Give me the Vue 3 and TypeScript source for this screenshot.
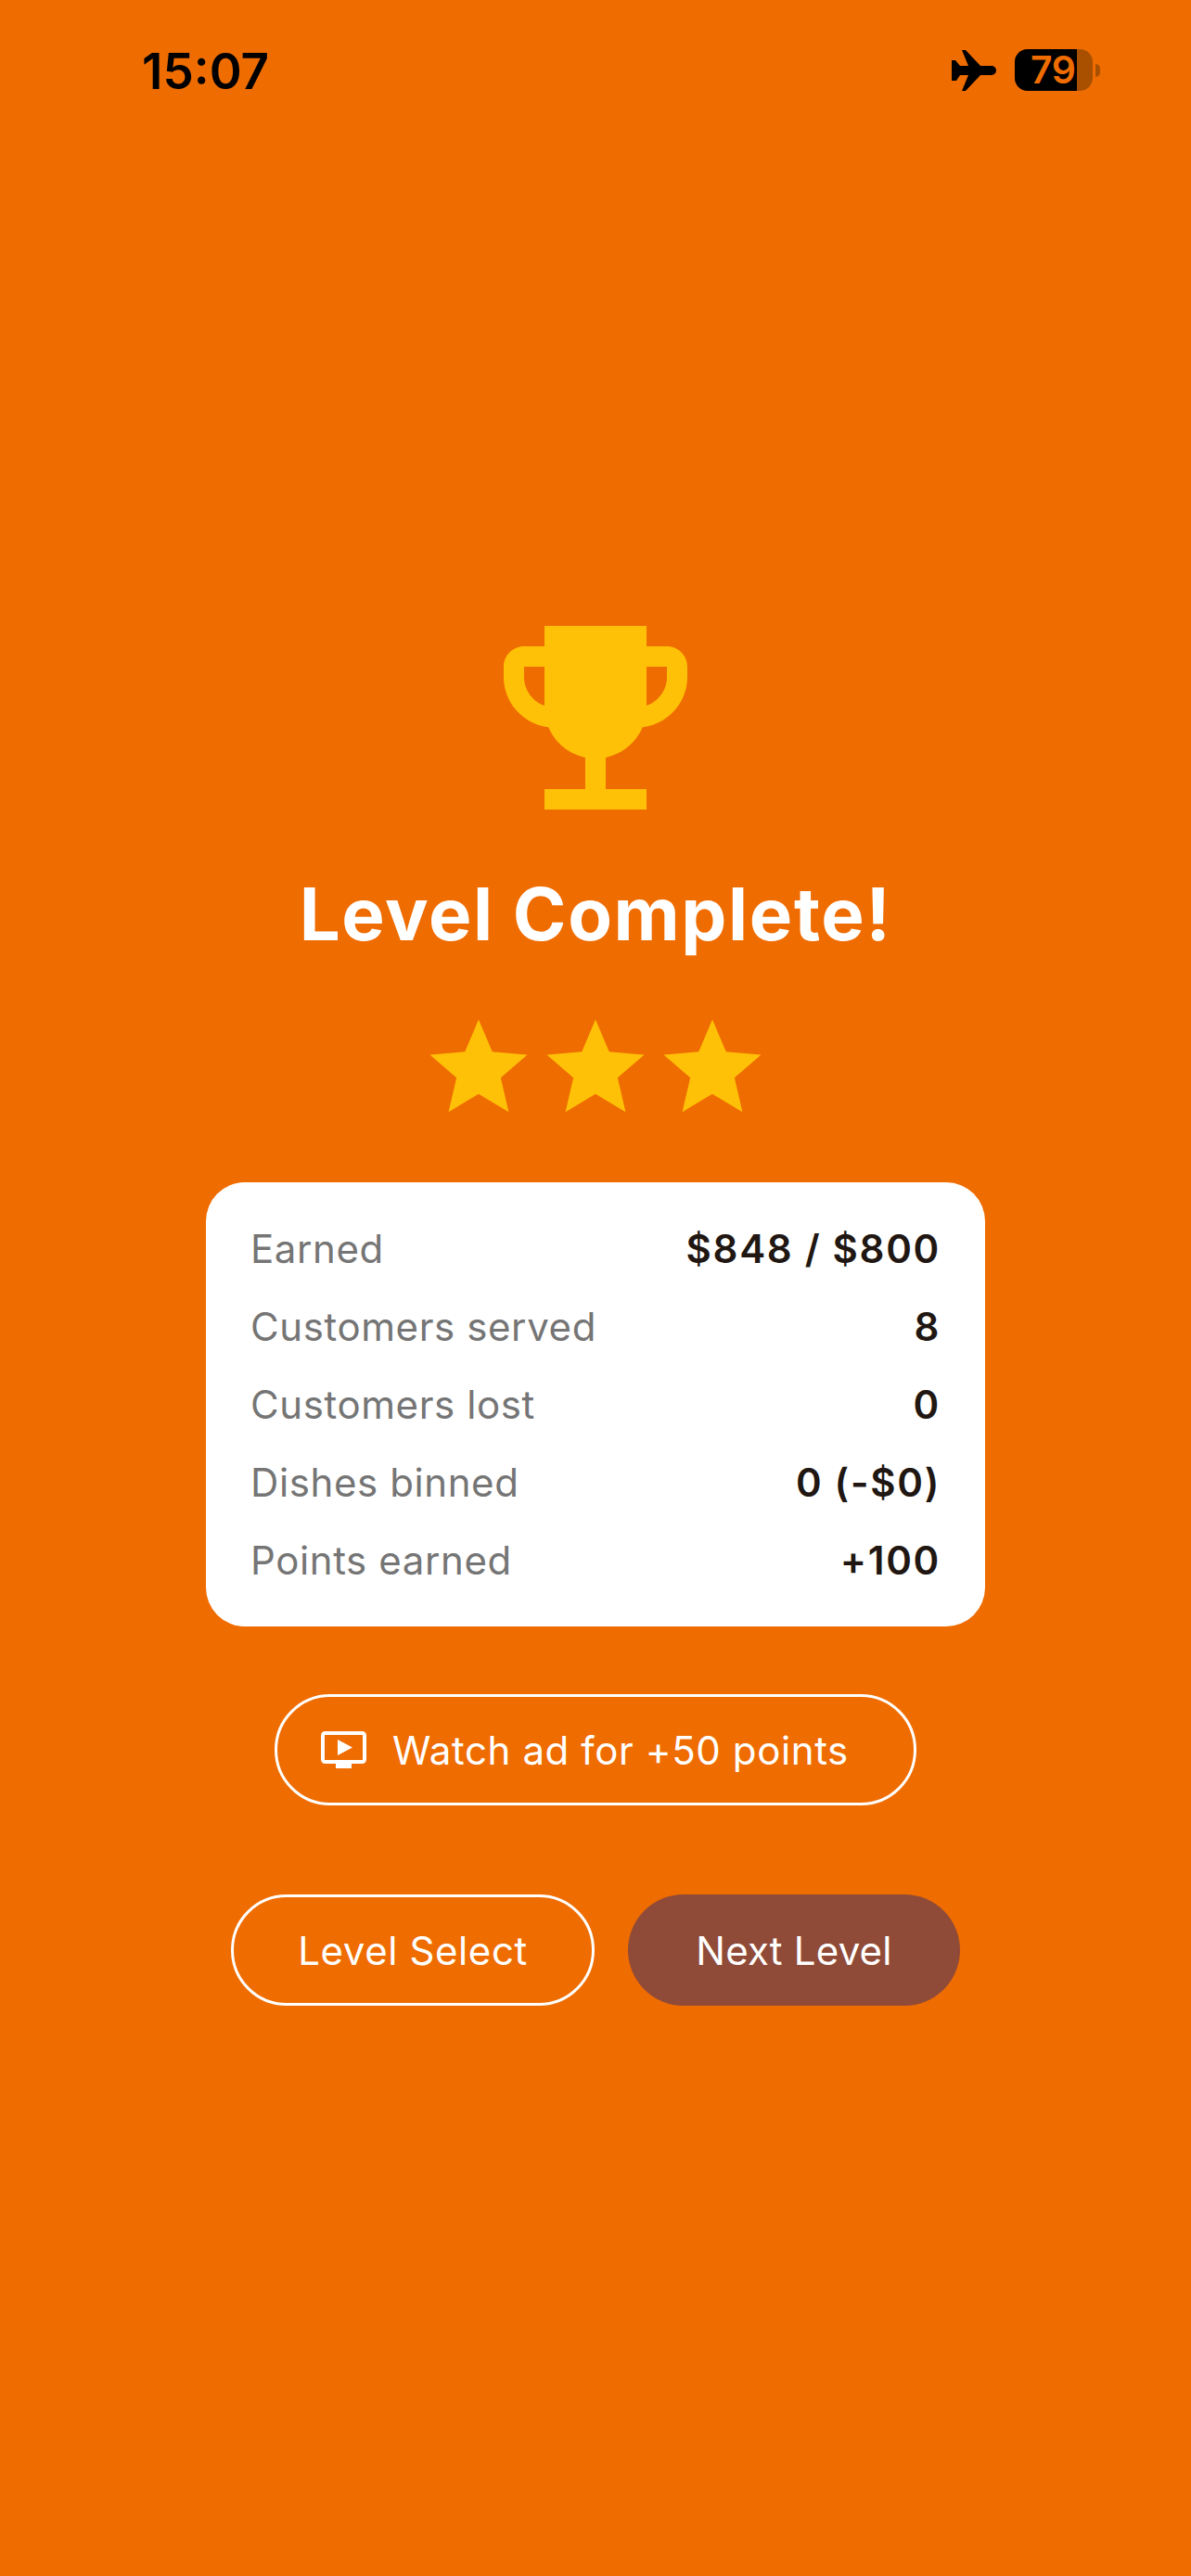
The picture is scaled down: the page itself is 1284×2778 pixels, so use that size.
<script setup lang="ts">
const rows: { label: string; value: string }[] = [
  { label: 'Earned', value: '$848 / $800' },
  { label: 'Customers served', value: '8' },
  { label: 'Customers lost', value: '0' },
  { label: 'Dishes binned', value: '0 (-$0)' },
  { label: 'Points earned', value: '+100' },
]
const stars: number[] = [1, 2, 3]
</script>

<template>
  <div class="screen">
    <header class="status">
      <span class="time">15:07</span>
      <div class="status-right">
        <svg class="plane" width="48" height="44" viewBox="0 0 48 44">
          <path d="M11 0h4L31 17h12a5 5 0 0 1 0 10H31L15 44h-4l7-17H9l-4 6H0V11h4l5 6h9z" fill="#000" />
        </svg>
        <div class="battery">
          <div class="battery-body">
            <div class="battery-fill"></div>
            <span class="battery-num">79</span>
          </div>
          <div class="battery-nub"></div>
        </div>
      </div>
    </header>

    <main class="content">
      <svg class="trophy" viewBox="0 0 24 24" width="264" height="264">
        <path fill="#ffc107" d="M19 5h-2V3H7v2H5c-1.100 0-2 .9-2 2v1c0 2.550 1.920 4.630 4.390 4.940.63 1.500 1.980 2.630 3.610 2.960V19H7v2h10v-2h-4v-3.100c1.630-.33 2.980-1.460 3.610-2.960C19.080 12.630 21 10.550 21 8V7c0-1.100-.9-2-2-2zM5 8V7h2v3.820C5.840 10.400 5 9.300 5 8zm14 0c0 1.300-.84 2.400-2 2.820V7h2v1z" />
      </svg>
      <h1 class="title">Level Complete!</h1>
      <div class="stars">
        <svg v-for="s in stars" :key="s" viewBox="0 0 24 24" width="126" height="126">
          <path fill="#ffc107" d="M12 17.270L18.180 21l-1.640-7.030L22 9.240l-7.190-.61L12 2 9.190 8.630 2 9.240l5.460 4.730L5.820 21z" />
        </svg>
      </div>
      <section class="card">
        <div v-for="r in rows" :key="r.label" class="row">
          <span class="label">{{ r.label }}</span>
          <span class="value">{{ r.value }}</span>
        </div>
      </section>
      <button class="btn watch">
        <svg viewBox="0 0 49 40" width="49" height="40">
          <rect x="2" y="2" width="45" height="31" rx="2.500" fill="none" stroke="#fff" stroke-width="4" />
          <path fill="#fff" d="M18 9L34 17.500 18 26zM16 35h17v5H16z" />
        </svg>
        <span>Watch ad for +50 points</span>
      </button>
      <div class="actions">
        <button class="btn outline">Level Select</button>
        <button class="btn solid">Next Level</button>
      </div>
    </main>
  </div>
</template>

<style>
html, body { margin: 0; background: #ef6c00; }
</style>

<style scoped>
.screen {
  width: 1284px;
  height: 2778px;
  background: #ef6c00;
  font-family: Inter, "Noto Sans", sans-serif;
  display: flex;
  flex-direction: column;
  overflow: hidden;
}
.status {
  height: 642px;
  box-sizing: border-box;
  padding: 46px 98px 0 153px;
  display: flex;
  justify-content: space-between;
  align-items: flex-start;
  flex: none;
}
.time {
  font-size: 53px;
  font-weight: 600;
  line-height: 62px;
  color: #000;
}
.status-right {
  display: flex;
  align-items: center;
  gap: 20px;
  padding-top: 7px;
}
.plane { display: block; }
.battery { display: flex; align-items: center; gap: 3px; }
.battery-body {
  position: relative;
  width: 84px;
  height: 45px;
  border-radius: 14px;
  background: #a85000;
}
.battery-fill {
  width: 67px;
  height: 45px;
  background: #000;
  border-radius: 14px 0 0 14px;
}
.battery-num {
  position: absolute;
  left: 17px;
  top: 0;
  font-size: 41px;
  line-height: 45px;
  font-weight: 600;
  letter-spacing: -0.5px;
  color: #ef6c00;
}
.battery-nub {
  width: 5px;
  height: 14px;
  background: #a85000;
  border-radius: 0 7px 7px 0;
}
.content {
  display: flex;
  flex-direction: column;
  align-items: center;
}
.trophy { display: block; }
.title {
  margin: 0;
  margin-top: 33px;
  font-size: 78px;
  line-height: 94px;
  font-weight: 700;
  color: #fff;
  letter-spacing: 1.6px;
}
.stars {
  display: flex;
  margin-top: 56px;
}
.stars svg { display: block; }
.card {
  box-sizing: border-box;
  width: 840px;
  margin-top: 60px;
  padding: 46px 48px;
  background: #fff;
  border-radius: 42px;
  display: flex;
  flex-direction: column;
  gap: 33px;
}
.row {
  display: flex;
  justify-content: space-between;
  height: 51px;
  line-height: 51px;
  font-size: 42px;
}
.label { color: #757575; letter-spacing: 0.6px; }
.value { color: #211712; font-weight: 600; letter-spacing: 1.7px; }
.btn {
  box-sizing: border-box;
  height: 120px;
  border-radius: 60px;
  font-family: inherit;
  font-size: 42px;
  font-weight: 400;
  letter-spacing: 0.6px;
  color: #fff;
  background: transparent;
  border: 3px solid #fff;
  display: flex;
  align-items: center;
  justify-content: center;
  padding: 0;
}
.watch {
  width: 692px;
  margin-top: 73px;
  gap: 28px;
  justify-content: flex-start;
  padding-left: 47px;
}
.actions {
  display: flex;
  gap: 36px;
  margin-top: 96px;
}
.outline { width: 392px; }
.solid {
  width: 358px;
  background: #904b38;
  border: none;
  letter-spacing: 0.2px;
}
</style>
